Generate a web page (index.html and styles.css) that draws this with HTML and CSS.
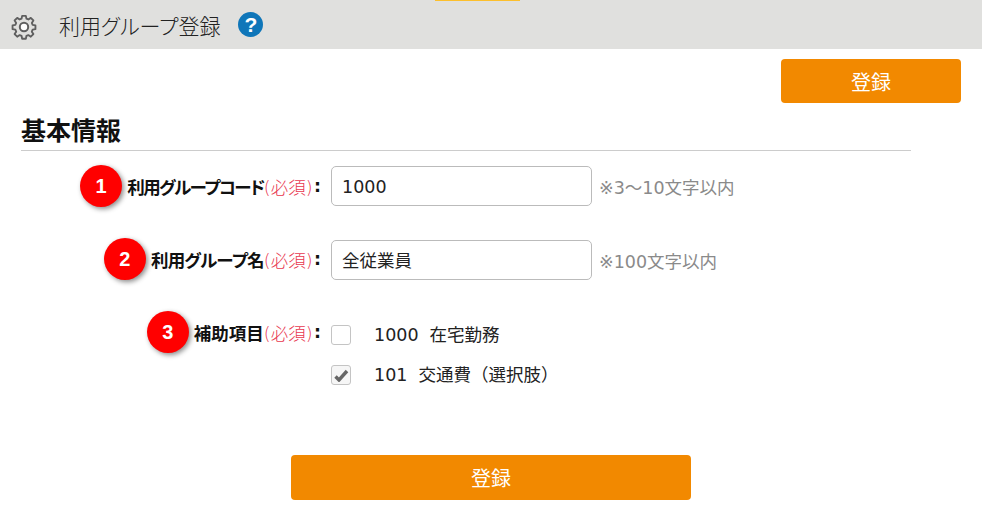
FILE: index.html
```html
<!DOCTYPE html>
<html lang="ja">

<head>
    <meta charset="UTF-8">
    <title>利用グループ登録</title>
    <link rel="stylesheet" href="styles.css">
</head>

<body>
    <div class="header">
        <span class="tabMark"></span>
        <svg class="gear" width="26" height="26" viewBox="0 0 26 26" fill="none" stroke="#5f5f5f" stroke-width="2" stroke-linejoin="round">
            <path d="M11 1.5h4l.6 3 2.1.9 2.6-1.7 2.8 2.8-1.7 2.6.9 2.1 3 .6v4l-3 .6-.9 2.1 1.7 2.6-2.8 2.8-2.6-1.7-2.1.9-.6 3h-4l-.6-3-2.1-.9-2.6 1.7-2.8-2.8 1.7-2.6-.9-2.1-3-.6v-4l3-.6.9-2.1-1.7-2.6 2.8-2.8 2.6 1.7 2.1-.9z" transform="translate(13 13) scale(.93) translate(-13 -13.5)"/>
            <circle cx="13" cy="13" r="4.2" fill="#fff"/>
        </svg>
        <span class="title">利用グループ登録</span>
        <span class="help">?</span>
    </div>

    <div class="topBar">
        <button class="btn btnTop">登録</button>
    </div>

    <h2 class="sectionTitle">基本情報</h2>

    <div class="form">
        <div class="row rowCode">
            <div class="label"><span class="badge">1</span><b class="labelText">利用グループコード</b><span class="req">(必須)</span><b class="colon">:</b></div>
            <input class="textInput" type="text" value="1000">
            <span class="hint">※3～10文字以内</span>
        </div>
        <div class="row rowName">
            <div class="label"><span class="badge">2</span><b class="labelText">利用グループ名</b><span class="req">(必須)</span><b class="colon">:</b></div>
            <input class="textInput" type="text" value="全従業員">
            <span class="hint">※100文字以内</span>
        </div>
        <div class="row rowItems">
            <div class="label"><span class="badge">3</span><b class="labelText">補助項目</b><span class="req">(必須)</span><b class="colon">:</b></div>
            <div class="checks">
                <div class="check"><span class="box"></span><span class="checkText"><span class="code">1000</span>在宅勤務</span></div>
                <div class="check"><span class="box boxOn">
                    <svg width="16" height="14" viewBox="0 0 16 14"><path d="M2.5 8.5l3.5 3.5 8-9" fill="none" stroke="#666" stroke-width="3.4"/></svg>
                </span><span class="checkText"><span class="code">101</span>交通費（選択肢）</span></div>
            </div>
        </div>
    </div>

    <div class="bottomBar">
        <button class="btn btnBottom">登録</button>
    </div>
</body>

</html>
```

FILE: styles.css
```css
* {
    box-sizing: border-box;
}

html,
body {
    height: 518px;
    overflow: hidden;
}

body {
    margin: 0;
    background-color: #fff;
    color: #222;
    font-family: "DejaVu Sans", "Noto Sans CJK JP", sans-serif;
    font-size: 17.5px;
}

.header {
    position: relative;
    display: flex;
    align-items: center;
    height: 49px;
    padding-left: 11px;
    padding-top: 4px;
    background-color: #e0e0de;
}

.tabMark {
    position: absolute;
    top: 0;
    left: 435px;
    width: 85px;
    height: 1px;
    background-color: #fcbf2c;
}

.gear {
    flex: none;
}

.title {
    margin-left: 22px;
    margin-top: -4px;
    font-feature-settings: "palt";
    font-size: 21px;
    font-weight: 300;
    color: #222;
}

.help {
    display: flex;
    align-items: center;
    justify-content: center;
    width: 25px;
    height: 25px;
    margin-left: 18px;
    margin-top: -4px;
    border-radius: 50%;
    background-color: #0f76b9;
    color: #fff;
    font-family: "Liberation Sans", sans-serif;
    font-size: 21px;
    font-weight: bold;
}

.topBar {
    display: flex;
    justify-content: flex-end;
    padding: 10px 21px 0 0;
}

.btn {
    border: none;
    border-radius: 4px;
    background-color: #f28900;
    color: #fff;
    font-family: inherit;
    font-size: 20px;
}

.btnTop {
    width: 180px;
    height: 44px;
}

.btnBottom {
    width: 400px;
    height: 45px;
}

.sectionTitle {
    width: 890px;
    height: 35px;
    margin: 13px 0 0 21px;
    border-bottom: 1px solid #ccc;
    font-size: 25px;
    font-weight: bold;
    line-height: 31px;
    color: #111;
}

.form {
    padding-top: 15px;
}

.row {
    display: flex;
    align-items: center;
}

.rowName {
    margin-top: 34px;
}

.rowItems {
    align-items: flex-start;
    margin-top: 45px;
}

.label {
    display: flex;
    align-items: center;
    justify-content: flex-end;
    width: 321px;
    height: 40px;
    white-space: nowrap;
}

.rowName .label {
    align-self: flex-start;
    height: 38px;
}

.rowItems .label {
    height: 14px;
}

.label b {
    color: #111;
}

.labelText {
    font-feature-settings: "palt";
}

.rowCode .labelText {
    letter-spacing: -1.5px;
}

.rowName .labelText {
    letter-spacing: -.75px;
}

.badge {
    display: flex;
    align-items: center;
    justify-content: center;
    flex: none;
    width: 42px;
    height: 42px;
    margin-right: 5px;
    border-radius: 50%;
    background-color: #f00;
    box-shadow: 2px 2px 5px rgba(0, 0, 0, .45);
    color: #fff;
    font-family: "Liberation Sans", sans-serif;
    font-size: 20px;
    font-weight: bold;
}

.req {
    color: #e8384f;
    font-weight: 300;
}

.colon {
    margin-left: 1.5px;
}

.textInput {
    width: 261px;
    height: 40px;
    margin-left: 10px;
    padding: 2px 10px 0;
    border: 1px solid #bbb;
    border-radius: 5px;
    color: #222;
    font-family: inherit;
    font-size: 17.5px;
}

.rowName .textInput {
    padding: 0 10px 2px;
}

.hint {
    margin-left: 7px;
    color: #8a8a8a;
}

.checks {
    display: flex;
    flex-direction: column;
    gap: 20px;
    margin-left: 10px;
}

.check {
    display: flex;
    align-items: center;
    height: 20px;
}

.box {
    display: flex;
    align-items: center;
    justify-content: center;
    width: 20px;
    height: 20px;
    margin-right: 23px;
    border: 1px solid #c4c4c4;
    border-radius: 3px;
}

.boxOn {
    background-color: #f6f6f6;
}

.checkText {
    margin-top: -4px;
    white-space: nowrap;
}

.code {
    margin-right: 11px;
}

.bottomBar {
    padding: 70px 0 0 291px;
}
```
